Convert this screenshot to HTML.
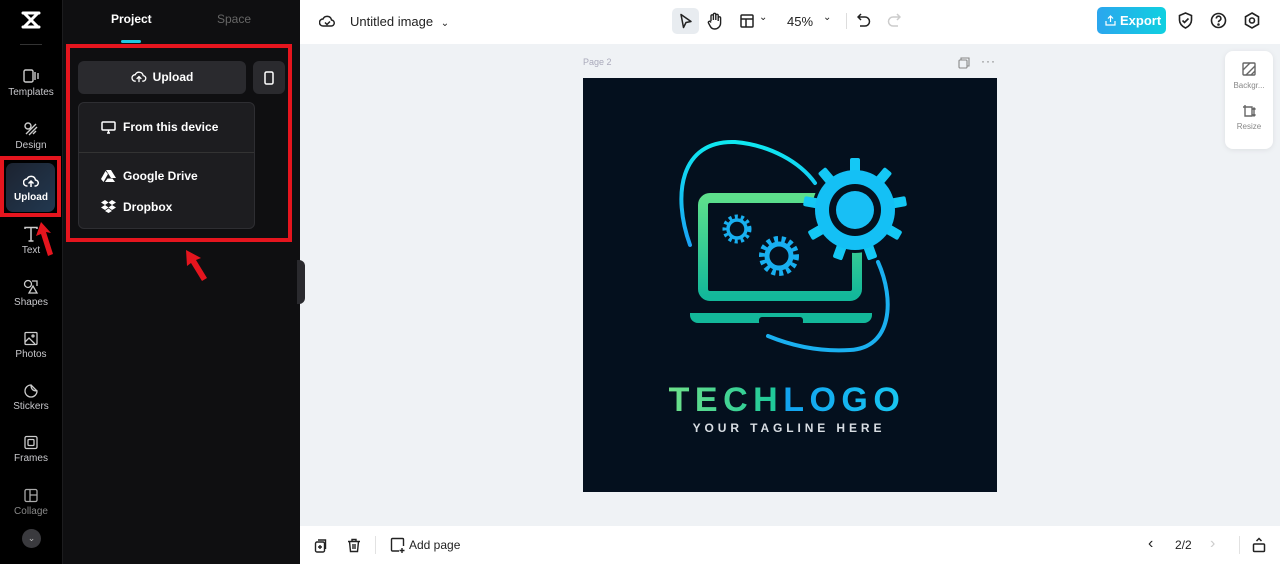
<!DOCTYPE html>
<html><head><meta charset="utf-8"><style>
*{margin:0;padding:0;box-sizing:border-box}
body{width:1280px;height:564px;overflow:hidden;position:relative;font-family:"Liberation Sans",sans-serif;background:#eff2f5}
.abs{position:absolute}
.side{left:0;top:0;width:63px;height:564px;background:#000;border-right:1px solid #1c1c1e}
.panel{left:63px;top:0;width:237px;height:564px;background:#0f0f11}
.nav{position:absolute;left:0;width:62px;text-align:center;color:#c8c8cc;font-size:10px}
.nav svg{display:block;margin:0 auto 3px}
.top{left:300px;top:0;width:980px;height:44px;background:#fff}
.bot{left:300px;top:526px;width:980px;height:38px;background:#fff}
.t{color:#222;font-size:13px}
</style></head><body>
<div class="abs side">
  <svg class="abs" style="left:19px;top:9px" width="24" height="22" viewBox="0 0 24 22"><path d="M4 4h16M4 18h16M6 5l12 12M18 5L6 17" stroke="#fff" stroke-width="3" fill="none" stroke-linecap="round"/></svg>
  <div class="abs" style="left:20px;top:44px;width:22px;height:1px;background:#333"></div>
  <div class="nav" style="top:68px"><svg width="16" height="16" viewBox="0 0 16 16" fill="none" stroke="#ccc" stroke-width="1.4"><rect x="1" y="2" width="9" height="12" rx="1.5"/><path d="M12 4v8M15 5v6"/></svg>Templates</div>
  <div class="nav" style="top:121px"><svg width="16" height="16" viewBox="0 0 16 16" fill="none" stroke="#ccc" stroke-width="1.4"><circle cx="5" cy="5" r="3"/><path d="M3 13l10-10M6 14l8-8M10 13l3-3"/></svg>Design</div>
  <div class="abs" style="left:6px;top:163px;width:49px;height:49px;border-radius:7px;background:linear-gradient(135deg,#1c2330,#223850)"></div>
  <div class="abs" style="left:0;top:156px;width:61px;height:61px;border:4px solid #e5151e"></div>
  <div class="nav" style="top:174px;color:#fff;font-weight:bold"><svg width="16" height="15" viewBox="0 0 16 15" fill="none" stroke="#fff" stroke-width="1.5"><path d="M4.5 12H4a3.5 3.5 0 010-7 4.5 4.5 0 018.5 1 3 3 0 01-.5 6h-.5M8 13V7M5.5 9.5L8 7l2.5 2.5"/></svg>Upload</div>
  <div class="nav" style="top:226px"><svg width="16" height="16" viewBox="0 0 16 16" fill="none" stroke="#ccc" stroke-width="1.5"><path d="M2 3V1.5h12V3M8 1.5V15M5.5 15h5"/></svg>Text</div>
  <div class="nav" style="top:279px"><svg width="16" height="15" viewBox="0 0 16 15" fill="none" stroke="#ccc" stroke-width="1.3"><circle cx="5" cy="5" r="3.5"/><path d="M9 2h5v5M6 14l4-7 4 7z"/></svg>Shapes</div>
  <div class="nav" style="top:331px"><svg width="16" height="15" viewBox="0 0 16 15" fill="none" stroke="#ccc" stroke-width="1.3"><rect x="2" y="1.5" width="12" height="12" rx="1"/><path d="M2 11l4-4 6 6"/><circle cx="10" cy="5" r="1"/></svg>Photos</div>
  <div class="nav" style="top:383px"><svg width="16" height="15" viewBox="0 0 16 15" fill="none" stroke="#ccc" stroke-width="1.3"><path d="M14 8A6 6 0 118 2c0 3 1 6 6 6zM8 2l6 6"/></svg>Stickers</div>
  <div class="nav" style="top:435px"><svg width="16" height="15" viewBox="0 0 16 15" fill="none" stroke="#ccc" stroke-width="1.3"><rect x="2" y="1.5" width="12" height="12" rx="1.5"/><rect x="5" y="4.5" width="6" height="6" rx="1"/></svg>Frames</div>
  <div class="nav" style="top:488px;color:#888"><svg width="16" height="15" viewBox="0 0 16 15" fill="none" stroke="#aaa" stroke-width="1.3"><rect x="2" y="1.5" width="12" height="12" rx="1.5"/><path d="M7 1.5v12M7 7h7"/></svg>Collage</div>
  <div class="abs" style="left:22px;top:529px;width:19px;height:19px;border-radius:50%;background:#3a3a3e;color:#bbb;font-size:9px;text-align:center;line-height:19px">⌄</div>
  <svg class="abs" style="left:34px;top:220px" width="24" height="38"><path d="M7 2L2 16l5-2 7 22 5-2-7-22 5 1z" fill="#e5151e"/></svg>
</div>
<div class="abs panel">
  <div class="abs" style="left:48px;top:12px;font-size:12px;font-weight:bold;color:#fff">Project</div>
  <div class="abs" style="left:58px;top:40px;width:20px;height:3px;background:#20c6e0;border-radius:2px"></div>
  <div class="abs" style="left:154px;top:12px;font-size:12px;color:#666">Space</div>
  <div class="abs" style="left:15px;top:61px;width:168px;height:33px;border-radius:6px;background:#2a2a2e;color:#fff;font-weight:bold;font-size:12px;text-align:center;line-height:33px"><svg style="vertical-align:-3px;margin-right:6px" width="16" height="14" viewBox="0 0 16 15" fill="none" stroke="#fff" stroke-width="1.4"><path d="M4.5 12H4a3.5 3.5 0 010-7 4.5 4.5 0 018.5 1 3 3 0 01-.5 6h-.5M8 13V7M5.5 9.5L8 7l2.5 2.5"/></svg>Upload</div>
  <div class="abs" style="left:190px;top:61px;width:32px;height:33px;border-radius:6px;background:#2a2a2e"><svg style="margin:10px 0 0 11px" width="10" height="14" viewBox="0 0 10 14"><rect x="1" y="1" width="8" height="12" rx="1.5" fill="none" stroke="#fff" stroke-width="1.5"/></svg></div>
  <div class="abs" style="left:15px;top:102px;width:177px;height:127px;border-radius:6px;background:#1d1d20;border:1px solid #2e2e32;color:#fff;font-weight:bold;font-size:12px">
    <div class="abs" style="left:22px;top:17px"><svg style="vertical-align:-3px;margin-right:7px" width="15" height="13" viewBox="0 0 15 13" fill="none" stroke="#fff" stroke-width="1.5"><rect x="1" y="1" width="13" height="8" rx="1"/><path d="M6 12h3M7.5 9v3"/></svg>From this device</div>
    <div class="abs" style="left:0;top:49px;width:175px;height:1px;background:#333"></div>
    <div class="abs" style="left:22px;top:66px"><svg style="vertical-align:-2px;margin-right:7px" width="15" height="13" viewBox="0 0 15 13"><path d="M5 1h5l5 8h-5zM4.5 2L0 10l2.5 3L7 5zM4 13h10l-2.5-3.5h-5z" fill="#fff"/></svg>Google Drive</div>
    <div class="abs" style="left:22px;top:97px"><svg style="vertical-align:-2px;margin-right:7px" width="15" height="13" viewBox="0 0 15 13" fill="#fff"><path d="M4 0L0 2.5 4 5 7.5 2.5zM11 0l4 2.5-4 2.5-3.5-2.5zM0 7.5L4 10l3.5-2.5L4 5zM15 7.5L11 10 7.5 7.5 11 5zM4 11l3.5 2 3.5-2-3.5-2.5z"/></svg>Dropbox</div>
  </div>
  <div class="abs" style="left:3px;top:44px;width:226px;height:198px;border:4px solid #e5151e"></div>
  <svg class="abs" style="left:121px;top:248px" width="26" height="36"><path d="M2 2l1 16 4-3 11 18 5-3-11-18 5-2z" fill="#e5151e"/></svg>
  <div class="abs" style="left:234px;top:260px;width:8px;height:44px;background:#2a2a2e;border-radius:0 6px 6px 0"></div>
</div>
<div class="abs top">
  <svg class="abs" style="left:19px;top:13px" width="17" height="16" viewBox="0 0 17 16" fill="none" stroke="#222" stroke-width="1.5"><path d="M4.5 13H4a3.5 3.5 0 010-7 4.5 4.5 0 018.5 1 3 3 0 01-.5 6H4.5zM6 9.5l2 2 3-3"/></svg>
  <div class="abs t" style="left:50px;top:14px">Untitled image <span style="font-size:10px;margin-left:4px">⌄</span></div>
  <div class="abs" style="left:372px;top:8px;width:27px;height:26px;border-radius:5px;background:#e8ecf0"></div>
  <svg class="abs" style="left:379px;top:13px" width="14" height="16" viewBox="0 0 14 16"><path d="M2 1.5l10 7-5 1-2.5 5z" fill="none" stroke="#222" stroke-width="1.5" stroke-linejoin="round"/></svg>
  <svg class="abs" style="left:407px;top:12px" width="16" height="18" viewBox="0 0 16 18" fill="none" stroke="#222" stroke-width="1.4"><path d="M4 9V4a1.2 1.2 0 012.4 0V8M6.4 8V2.5a1.2 1.2 0 012.4 0V8M8.8 8V3.5a1.2 1.2 0 012.4 0V9M11.2 9V6a1.2 1.2 0 012.4 0v5a6 6 0 01-6 6c-2 0-3.5-1-4.5-3L1.5 11a1.2 1.2 0 012-1.3L4 10.5"/></svg>
  <svg class="abs" style="left:440px;top:14px" width="14" height="14" viewBox="0 0 14 14" fill="none" stroke="#222" stroke-width="1.5"><rect x="1" y="1" width="12" height="12" rx="1"/><path d="M1 5h12M6 5v8"/></svg>
  <div class="abs t" style="left:459px;top:12px;font-size:10px">⌄</div>
  <div class="abs t" style="left:487px;top:14px">45%</div>
  <div class="abs t" style="left:523px;top:12px;font-size:10px">⌄</div>
  <div class="abs" style="left:546px;top:13px;width:1px;height:16px;background:#ddd"></div>
  <svg class="abs" style="left:557px;top:13px" width="14" height="16" viewBox="0 0 14 16" fill="none" stroke="#222" stroke-width="1.5"><path d="M4 1L1 4l3 3M1 4h7a4.5 4.5 0 010 9H3"/></svg>
  <svg class="abs" style="left:587px;top:13px" width="14" height="16" viewBox="0 0 14 16" fill="none" stroke="#ccc" stroke-width="1.5"><path d="M10 1l3 3-3 3M13 4H6a4.5 4.5 0 000 9h5"/></svg>
  <div class="abs" style="left:797px;top:7px;width:69px;height:27px;border-radius:5px;background:linear-gradient(90deg,#2ba6ee,#0fd0e0);color:#fff;font-weight:bold;font-size:13px;line-height:27px;padding-left:8px"><svg style="vertical-align:-1px;margin-right:4px" width="11" height="11" viewBox="0 0 11 11" fill="none" stroke="#fff" stroke-width="1.2"><path d="M1 6v4h9V6M5.5 7V1M3 3.5L5.5 1 8 3.5"/></svg>Export</div>
  <svg class="abs" style="left:878px;top:12px" width="15" height="17" viewBox="0 0 15 17" fill="none" stroke="#222" stroke-width="1.6"><path d="M7.5 1l6 2.5V8c0 4-3 6.5-6 8-3-1.5-6-4-6-8V3.5zM4.5 8.5l2 2 4-4"/></svg>
  <svg class="abs" style="left:910px;top:12px" width="17" height="17" viewBox="0 0 17 17" fill="none" stroke="#222" stroke-width="1.6"><circle cx="8.5" cy="8.5" r="7"/><path d="M6.3 6.5a2.3 2.3 0 114 1.5c-1 .7-1.8 1-1.8 2.3"/><circle cx="8.5" cy="12.5" r=".5" fill="#222"/></svg>
  <svg class="abs" style="left:944px;top:12px" width="16" height="17" viewBox="0 0 16 17" fill="none" stroke="#222" stroke-width="1.6"><path d="M8 1l6.5 3.75v7.5L8 16l-6.5-3.75v-7.5z"/><circle cx="8" cy="8.5" r="2.5"/></svg>
</div>
<div class="abs" style="left:583px;top:57px;font-size:9px;color:#aab">Page 2</div>
<svg class="abs" style="left:958px;top:57px" width="12" height="12" viewBox="0 0 12 12" fill="none" stroke="#888" stroke-width="1.1"><rect x="1" y="3" width="8" height="8" rx="1"/><path d="M3 3V1h8v8H9"/></svg>
<div class="abs" style="left:981px;top:54px;font-size:12px;color:#777;letter-spacing:1px">···</div>
<div class="abs" style="left:1225px;top:51px;width:48px;height:98px;background:#fff;border-radius:8px;box-shadow:0 1px 6px rgba(0,0,0,.08);text-align:center;font-size:8px;color:#888">
  <svg style="display:block;margin:11px auto 5px" width="14" height="14" viewBox="0 0 14 14" fill="none" stroke="#666" stroke-width="1.4"><rect x="1" y="1" width="12" height="12" rx="1"/><path d="M1 8l7-7M4 13l9-9M9 13l4-4"/></svg>Backgr...
  <svg style="display:block;margin:14px auto 4px" width="14" height="14" viewBox="0 0 14 14" fill="none" stroke="#666" stroke-width="1.4"><path d="M3 1v2M1 3h9v9H3V3M12 4v8M10.5 5.5L12 4l1.5 1.5M10.5 10.5L12 12l1.5-1.5"/></svg>Resize
</div>
<svg class="abs" style="left:583px;top:78px" width="414" height="414" viewBox="583 78 414 414">
  <defs>
    <linearGradient id="g1" x1="0" y1="0" x2="0" y2="1"><stop offset="0" stop-color="#5ddf8c"/><stop offset="1" stop-color="#13b89a"/></linearGradient>
    <linearGradient id="g2" x1="0" y1="0" x2="0" y2="1"><stop offset="0" stop-color="#0fe8f0"/><stop offset="1" stop-color="#1aa2f5"/></linearGradient>
    <linearGradient id="gt" x1="0" y1="0" x2="1" y2="0"><stop offset="0" stop-color="#6fe08a"/><stop offset=".45" stop-color="#1ec99a"/><stop offset=".5" stop-color="#12a3f0"/><stop offset="1" stop-color="#18c8f0"/></linearGradient>
    <g id="tooth"><rect x="-5" y="-52" width="10" height="16" rx="2"/></g>
  </defs>
  <rect x="583" y="78" width="414" height="414" fill="#04101e"/>
  <path d="M690 245C672 195 680 140 735 142C770 145 800 162 815 183" stroke="url(#g2)" stroke-width="4" fill="none" stroke-linecap="round"/>
  <path d="M878 262C895 300 892 348 850 350C818 352 790 345 768 336" stroke="#1ab0f0" stroke-width="4" fill="none" stroke-linecap="round"/>
  <rect x="703" y="198" width="154" height="98" rx="7" fill="none" stroke="url(#g1)" stroke-width="10"/>
  <path d="M690 313h182v2a8 8 0 01-8 8H698a8 8 0 01-8-8z" fill="#13b89a"/>
  <rect x="759" y="317" width="44" height="8" rx="3" fill="#04101e"/>
  <g transform="translate(855 210)" fill="url(#g2)">
    <circle r="43" fill="#04101e"/>
    <g fill="#14c8f5"><use href="#tooth"/><use href="#tooth" transform="rotate(40)"/><use href="#tooth" transform="rotate(80)"/><use href="#tooth" transform="rotate(120)"/><use href="#tooth" transform="rotate(160)"/><use href="#tooth" transform="rotate(200)"/><use href="#tooth" transform="rotate(240)"/><use href="#tooth" transform="rotate(280)"/><use href="#tooth" transform="rotate(320)"/></g>
    <circle r="40" fill="#14c0f5"/>
    <circle r="26" fill="#04101e"/>
    <circle r="19" fill="#18bff5"/>
  </g>
  <g transform="translate(737 229)"><circle r="12" fill="none" stroke="#18aff0" stroke-width="5" stroke-dasharray="3 3"/><circle r="9" fill="none" stroke="#18aff0" stroke-width="3.5"/></g>
  <g transform="translate(779 256)"><circle r="17" fill="none" stroke="#18aff0" stroke-width="6" stroke-dasharray="4 3.5"/><circle r="12" fill="none" stroke="#18aff0" stroke-width="5"/></g>
  <text x="787" y="411" text-anchor="middle" font-family="Liberation Sans" font-weight="bold" font-size="34" letter-spacing="5.5" fill="url(#gt)">TECHLOGO</text>
  <text x="789" y="432" text-anchor="middle" font-family="Liberation Sans" font-weight="bold" font-size="12" letter-spacing="3.9" fill="#d8dde3">YOUR TAGLINE HERE</text>
</svg>
<div class="abs bot">
  <svg class="abs" style="left:14px;top:12px" width="14" height="15" viewBox="0 0 14 15" fill="none" stroke="#222" stroke-width="1.4"><rect x="1.5" y="4" width="9" height="10" rx="1.5"/><path d="M4 2h7.5v9"/><path d="M6 7v4M4 9h4"/></svg>
  <svg class="abs" style="left:47px;top:12px" width="14" height="15" viewBox="0 0 14 15" fill="none" stroke="#222" stroke-width="1.4"><path d="M1 3.5h12M5 3.5V1.5h4v2M2.5 3.5l1 10h7l1-10M6 6v5M8 6v5"/></svg>
  <div class="abs" style="left:75px;top:10px;width:1px;height:18px;background:#e2e2e2"></div>
  <svg class="abs" style="left:90px;top:11px" width="16" height="16" viewBox="0 0 16 16" fill="none" stroke="#222" stroke-width="1.4"><path d="M9 14H2.5a1 1 0 01-1-1V2.5a1 1 0 011-1h10a1 1 0 011 1V9M12 11v5M9.5 13.5h5"/></svg>
  <div class="abs t" style="left:109px;top:12px;font-size:12px">Add page</div>
  <div class="abs t" style="left:848px;top:9px;font-size:16px">‹</div>
  <div class="abs t" style="left:875px;top:12px;font-size:12px">2/2</div>
  <div class="abs" style="left:910px;top:9px;font-size:16px;color:#ccc">›</div>
  <div class="abs" style="left:939px;top:10px;width:1px;height:18px;background:#e2e2e2"></div>
  <svg class="abs" style="left:952px;top:11px" width="14" height="16" viewBox="0 0 14 16" fill="none" stroke="#222" stroke-width="1.5"><rect x="1.5" y="7" width="11" height="7.5" rx="1"/><path d="M4.5 4L7 1.5 9.5 4"/></svg>
</div>
</body></html>
